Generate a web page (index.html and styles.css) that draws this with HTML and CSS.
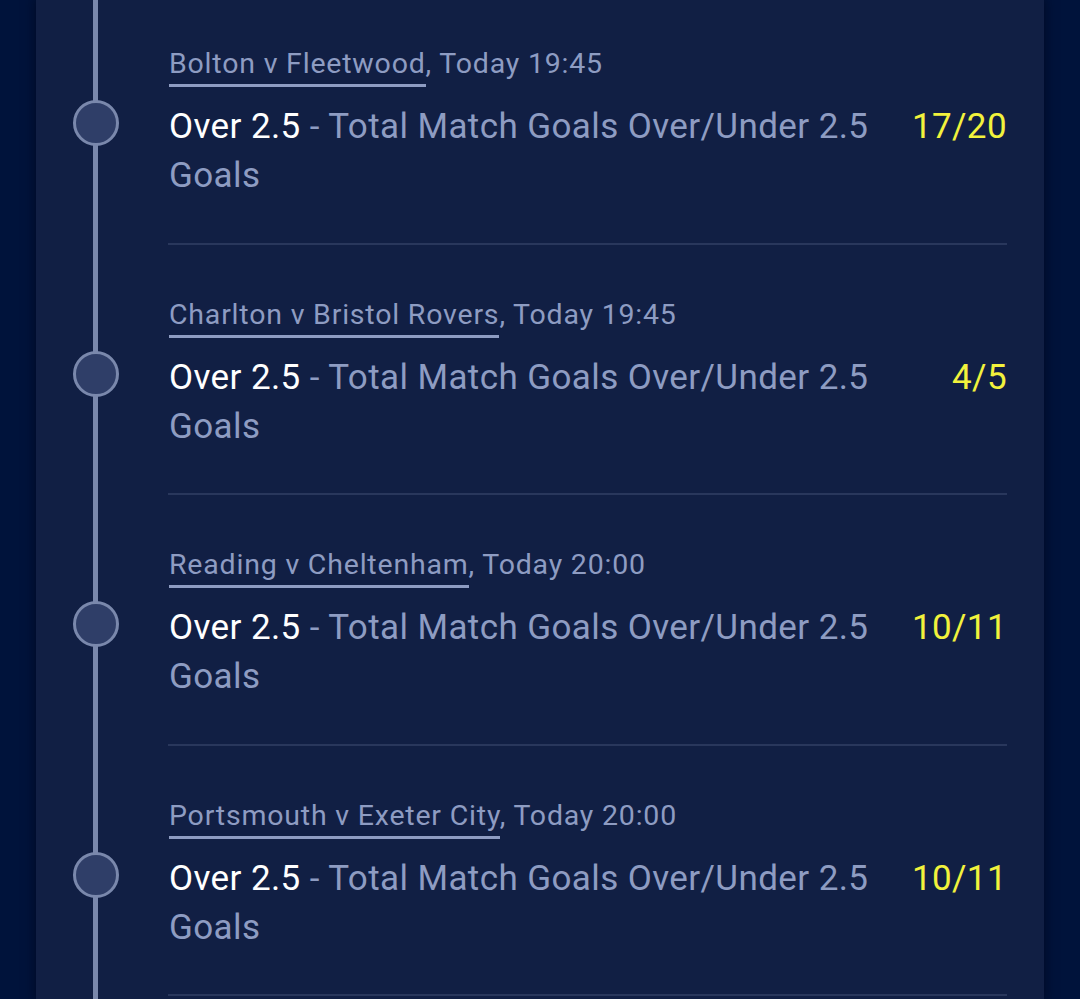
FILE: index.html
```html
<!DOCTYPE html>
<html lang="en">

<head>
    <meta charset="UTF-8">
    <meta name="viewport" content="width=device-width, initial-scale=1.0">
    <title>Bet Slip</title>
    <link rel="stylesheet" href="styles.css">
</head>

<body>
    <div class="page">
        <div class="card">
            <div class="selections">
                <div class="selection">
                    <div class="track">
                        <span class="dot"></span>
                    </div>
                    <div class="info">
                        <p class="event"><span class="teams">Bolton v Fleetwood</span>, Today 19:45</p>
                        <div class="market">
                            <p class="marketText"><span class="pick">Over 2.5</span> - Total Match Goals Over/Under 2.5 Goals</p>
                            <span class="price">17/20</span>
                        </div>
                    </div>
                </div>

                <div class="selection">
                    <div class="track">
                        <span class="dot"></span>
                    </div>
                    <div class="info">
                        <p class="event"><span class="teams">Charlton v Bristol Rovers</span>, Today 19:45</p>
                        <div class="market">
                            <p class="marketText"><span class="pick">Over 2.5</span> - Total Match Goals Over/Under 2.5 Goals</p>
                            <span class="price">4/5</span>
                        </div>
                    </div>
                </div>

                <div class="selection">
                    <div class="track">
                        <span class="dot"></span>
                    </div>
                    <div class="info">
                        <p class="event"><span class="teams">Reading v Cheltenham</span>, Today 20:00</p>
                        <div class="market">
                            <p class="marketText"><span class="pick">Over 2.5</span> - Total Match Goals Over/Under 2.5 Goals</p>
                            <span class="price">10/11</span>
                        </div>
                    </div>
                </div>

                <div class="selection">
                    <div class="track">
                        <span class="dot"></span>
                    </div>
                    <div class="info">
                        <p class="event"><span class="teams">Portsmouth v Exeter City</span>, Today 20:00</p>
                        <div class="market">
                            <p class="marketText"><span class="pick">Over 2.5</span> - Total Match Goals Over/Under 2.5 Goals</p>
                            <span class="price">10/11</span>
                        </div>
                    </div>
                </div>
            </div>
        </div>
    </div>
</body>

</html>
```

FILE: styles.css
```css
* {
    margin: 0px;
    padding: 0px;
    box-sizing: border-box;
}

body {
    background-color: #00133b;
    font-family: Roboto, "Liberation Sans", sans-serif;
    height: 999px;
    overflow: hidden;
}

.page {
    padding: 0px 36px;
    height: 100%;
}

.card {
    background-color: #111f44;
    height: 100%;
    overflow: hidden;
    box-shadow: 0 0 10px 2px rgba(0, 6, 25, 0.55);
    padding-right: 37px;
}

/* the timeline line runs the whole height of the card */
.selections {
    margin-top: -6px;
    height: calc(100% + 6px);
    background: linear-gradient(to right, transparent 57.5px, #7a88ac 57.5px, #7a88ac 62.5px, transparent 62.5px);
}

.selection {
    display: grid;
    grid-template-columns: 132px 1fr;
    height: 250.5px;
}

.track {
    position: relative;
}

.dot {
    position: absolute;
    top: 106px;
    left: 37px;
    width: 46px;
    height: 46px;
    border-radius: 50%;
    background-color: #2f3e68;
    border: 3px solid #7a88ac;
}

.info {
    padding-top: 52px;
    border-bottom: 2.5px solid #29375c;
}

.event {
    font-size: 28.5px;
    line-height: 36px;
    letter-spacing: 0.8px;
    color: #8e9cc2;
    padding-left: 1px;
}

.teams {
    border-bottom: 3px solid #8e9cc2;
    padding-bottom: 4px;
}

.market {
    display: grid;
    grid-template-columns: 1fr 130px;
    margin-top: 20px;
}

.marketText {
    font-size: 35px;
    line-height: 49px;
    letter-spacing: 0.4px;
    color: #8e9cc2;
    padding-left: 1px;
}

.pick {
    color: #ffffff;
}

.price {
    font-size: 35px;
    line-height: 49px;
    letter-spacing: 0.4px;
    color: #f2f23c;
    text-align: right;
}
```
